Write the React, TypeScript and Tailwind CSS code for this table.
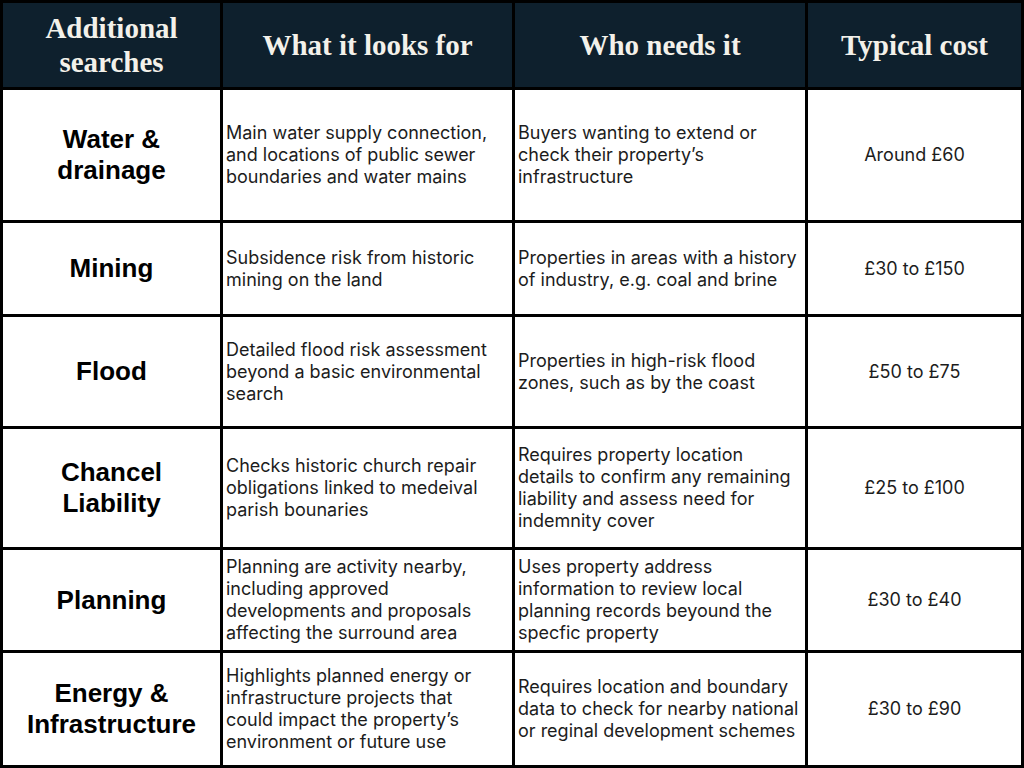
import React from "react";

const rows = [
  {
    name: ["Water &", "drainage"],
    what: "Main water supply connection, and locations of public sewer boundaries and water mains",
    who: "Buyers wanting to extend or check their property\u2019s infrastructure",
    cost: "Around \u00a360",
    h: "h-[130px]",
  },
  {
    name: ["Mining"],
    what: "Subsidence risk from historic mining on the land",
    who: "Properties in areas with a history of industry, e.g. coal and brine",
    cost: "\u00a330 to \u00a3150",
    h: "h-[91px]",
  },
  {
    name: ["Flood"],
    what: "Detailed flood risk assessment beyond a basic environmental search",
    who: "Properties in high-risk flood zones, such as by the coast",
    cost: "\u00a350 to \u00a375",
    h: "h-[109px]",
  },
  {
    name: ["Chancel", "Liability"],
    what: "Checks historic church repair obligations linked to medeival parish bounaries",
    who: "Requires property location details to confirm any remaining liability and assess need for indemnity cover",
    cost: "\u00a325 to \u00a3100",
    h: "h-[118px]",
  },
  {
    name: ["Planning"],
    what: "Planning are activity nearby, including approved developments and proposals affecting the surround area",
    who: "Uses property address information to review local planning records beyound the specfic property",
    cost: "\u00a330 to \u00a340",
    h: "h-[100px]",
  },
  {
    name: ["Energy &", "Infrastructure"],
    what: "Highlights planned energy or infrastructure projects that could impact the property\u2019s environment or future use",
    who: "Requires location and boundary data to check for nearby national or reginal development schemes",
    cost: "\u00a330 to \u00a390",
    h: "h-[112px]",
  },
];

const headers = [["Additional", "searches"], ["What it looks for"], ["Who needs it"], ["Typical cost"]];

const bodyCell =
  "bg-white flex items-center pl-[3px] text-[#1c1c1c] text-[18px] leading-[22px] font-['Inter',sans-serif]";

export default function App() {
  return (
    <div className="w-[1024px] h-[768px] bg-black p-[3px] grid grid-cols-[217px_289px_290px_213px] gap-[3px] content-start">
      {headers.map((lines, i) => (
        <div
          key={i}
          className="h-[84px] bg-[#0e202d] flex flex-col items-center justify-center text-[#f3f1ea] text-[29px] leading-[34px] font-bold text-center font-['Liberation_Serif',serif]"
        >
          {lines.map((l) => (
            <span key={l}>{l}</span>
          ))}
        </div>
      ))}
      {rows.map((r, i) => (
        <React.Fragment key={i}>
          <div
            className={`${r.h} bg-white flex flex-col items-center justify-center text-black text-[26px] leading-[31px] font-bold text-center font-['Liberation_Sans',Arial,sans-serif]`}
          >
            {r.name.map((l) => (
              <span key={l}>{l}</span>
            ))}
          </div>
          <div className={`${r.h} ${bodyCell} pr-[8px]`}>
            <p>{r.what}</p>
          </div>
          <div className={`${r.h} ${bodyCell} pr-[3px]`}>
            <p>{r.who}</p>
          </div>
          <div className={`${r.h} ${bodyCell} justify-center pr-[3px]`}>
            <p>{r.cost}</p>
          </div>
        </React.Fragment>
      ))}
    </div>
  );
}
